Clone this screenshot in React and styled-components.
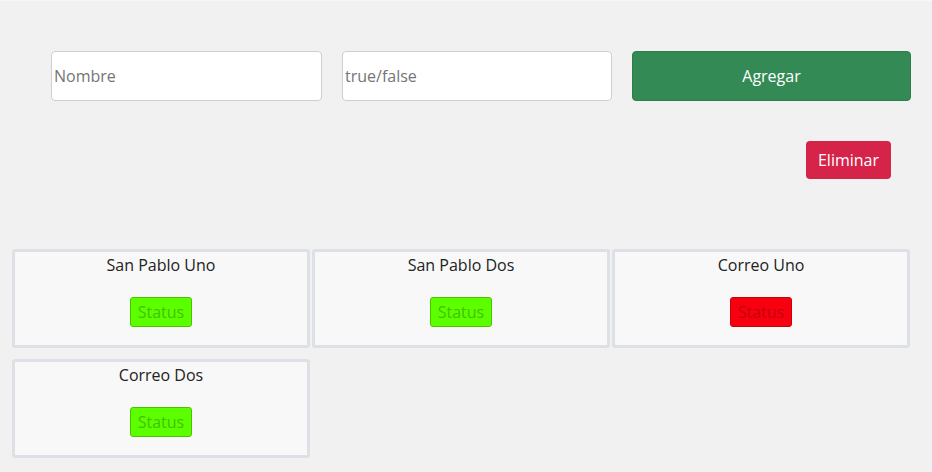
import React from "react";
import styled, { createGlobalStyle } from "styled-components";

const GlobalStyle = createGlobalStyle`
  html, body {
    margin: 0;
    padding: 0;
    background: #f1f1f1;
    font-family: "Open Sans", "Noto Sans", sans-serif;
  }
`;

const stations = [
  { name: "San Pablo Uno", ok: true },
  { name: "San Pablo Dos", ok: true },
  { name: "Correo Uno", ok: false },
  { name: "Correo Dos", ok: true },
];

const App = () => {
  return (
    <Page>
      <GlobalStyle />
      <Form>
        <TextInput placeholder="Nombre" />
        <TextInput placeholder="true/false" />
        <AddBtn>Agregar</AddBtn>
      </Form>
      <Actions>
        <DeleteBtn>Eliminar</DeleteBtn>
      </Actions>
      {/* Lista de estaciones */}
      <Grid>
        {stations.map((s) => (
          <Card key={s.name}>
            <CardTitle>{s.name}</CardTitle>
            <StatusBtn ok={s.ok}>Status</StatusBtn>
          </Card>
        ))}
      </Grid>
    </Page>
  );
};

const Page = styled.div`
  width: 932px;
  height: 472px;
  padding-top: 51px;
  box-sizing: border-box;
  border-top: 1px solid #f7f7f7;
`;

const Form = styled.div`
  display: grid;
  grid-template-columns: 271px 270px 279px;
  column-gap: 20px;
  margin-left: 51px;
  margin-top: -1px;
`;

const TextInput = styled.input`
  height: 50px;
  box-sizing: border-box;
  border: 1px solid #cfcfcf;
  border-radius: 4px;
  background: #fff;
  padding: 0 2px;
  font-family: inherit;
  font-size: 16px;
  color: #333;
  outline: none;

  ::placeholder {
    color: #6c7480;
  }
`;

const AddBtn = styled.button`
  height: 50px;
  border: 1px solid #2f7d4f;
  border-radius: 4px;
  background: #348a55;
  color: #fff;
  font-family: inherit;
  font-size: 16px;
`;

const Actions = styled.div`
  display: flex;
  justify-content: flex-end;
  padding-right: 41px;
  margin-top: 40px;
`;

const DeleteBtn = styled.button`
  width: 85px;
  height: 38px;
  border: none;
  border-radius: 4px;
  background: #d6234a;
  color: #fff;
  font-family: inherit;
  font-size: 16px;
`;

const Grid = styled.div`
  display: grid;
  grid-template-columns: repeat(3, 298px);
  column-gap: 2px;
  row-gap: 11px;
  margin-left: 12px;
  margin-top: 70px;
`;

const Card = styled.div`
  height: 99px;
  box-sizing: border-box;
  border: 3px solid #dde1e6;
  border-radius: 3px;
  background: #f8f8f8;
  display: flex;
  flex-direction: column;
  align-items: center;
`;

const CardTitle = styled.div`
  font-size: 16px;
  color: #222;
  margin-top: 2px;
  line-height: 22px;
`;

const StatusBtn = styled.button`
  margin-top: 21px;
  width: 62px;
  height: 30px;
  padding: 0;
  border-radius: 3px;
  border: 1px solid ${(p) => (p.ok ? "#4bc400" : "#c8000c")};
  background: ${(p) => (p.ok ? "#5cff00" : "#f7000f")};
  color: ${(p) => (p.ok ? "#44c200" : "#c4000c")};
  font-family: inherit;
  font-size: 16px;
`;

export default App;
